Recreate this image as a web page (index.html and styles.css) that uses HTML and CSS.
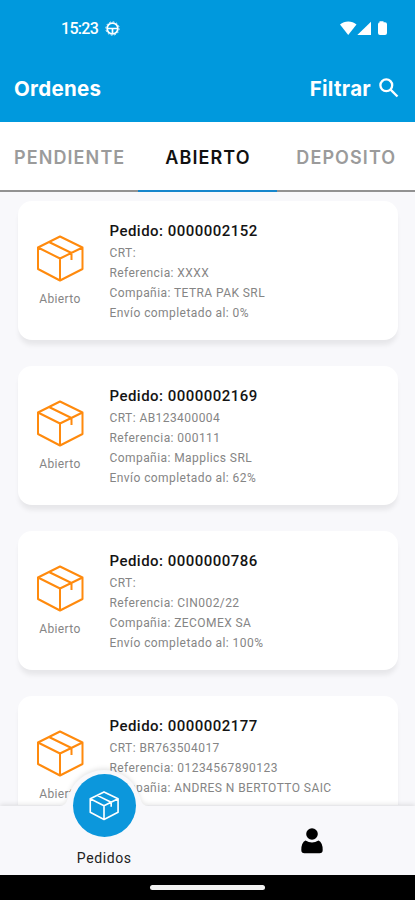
FILE: index.html
```
<!DOCTYPE html>
<html lang="es">
  <head>
    <title>Ordenes</title>
    <meta charset="UTF-8" />
    <meta name="viewport" content="width=device-width, initial-scale=1.0" />
    <link rel="stylesheet" href="styles.css">
  </head>
  <body>
    <svg class="symbols" aria-hidden="true">
      <symbol id="box" viewBox="0 0 48 48">
        <path d="M24 1.500 46.500 12.500V34L24 45.500 2 34V12.500Z M2 12.500 24 23.500 46.500 12.500 M24 23.500V45.500 M13 7 35.500 18V25" />
      </symbol>
    </svg>

    <div class="screen">
      <header class="header">
        <div class="status-bar">
          <span class="time">15:23</span>
          <svg class="status-wheel" viewBox="0 0 16 16">
            <circle cx="8" cy="8" r="5.7" fill="none" stroke="#fff" stroke-width="1.8" />
            <circle cx="8" cy="8" r="7.1" fill="none" stroke="#fff" stroke-width="1" stroke-dasharray="1.8 1.92" />
            <path d="M3 8h10M8 8v5" fill="none" stroke="#fff" stroke-width="1.8" />
          </svg>
          <svg class="status-icons" viewBox="0 0 48 15">
            <path d="M0 3.6C4.5-.4 12-.4 16.500 3.600L8.200 14Z" />
            <path d="M31 .8V14H17.300Z" />
            <path d="M39.500 1.200V.2h4v1h1.500q2 0 2 2V12q0 2-2 2h-5q-2 0-2-2V3.200q0-2 2-2Z" />
          </svg>
        </div>
        <div class="title-bar">
          <h1>Ordenes</h1>
          <button class="filter">
            Filtrar
            <svg viewBox="0 0 20 20">
              <circle cx="7.300" cy="7.300" r="5.900" />
              <path d="M11.600 11.600 18.500 18.500" />
            </svg>
          </button>
        </div>
      </header>

      <nav class="tabs">
        <a class="tab">PENDIENTE</a>
        <a class="tab active">ABIERTO</a>
        <a class="tab">DEPOSITO</a>
      </nav>

      <main class="orders">
        <article class="card">
          <div class="state">
            <svg class="box-icon"><use href="#box" /></svg>
            <span>Abierto</span>
          </div>
          <div class="info">
            <h2>Pedido: 0000002152</h2>
            <p>CRT:</p>
            <p>Referencia: XXXX</p>
            <p>Compañia: TETRA PAK SRL</p>
            <p>Envío completado al: 0%</p>
          </div>
        </article>

        <article class="card">
          <div class="state">
            <svg class="box-icon"><use href="#box" /></svg>
            <span>Abierto</span>
          </div>
          <div class="info">
            <h2>Pedido: 0000002169</h2>
            <p>CRT: AB123400004</p>
            <p>Referencia: 000111</p>
            <p>Compañia: Mapplics SRL</p>
            <p>Envío completado al: 62%</p>
          </div>
        </article>

        <article class="card">
          <div class="state">
            <svg class="box-icon"><use href="#box" /></svg>
            <span>Abierto</span>
          </div>
          <div class="info">
            <h2>Pedido: 0000000786</h2>
            <p>CRT:</p>
            <p>Referencia: CIN002/22</p>
            <p>Compañia: ZECOMEX SA</p>
            <p>Envío completado al: 100%</p>
          </div>
        </article>

        <article class="card">
          <div class="state">
            <svg class="box-icon"><use href="#box" /></svg>
            <span>Abierto</span>
          </div>
          <div class="info">
            <h2>Pedido: 0000002177</h2>
            <p>CRT: BR763504017</p>
            <p>Referencia: 01234567890123</p>
            <p>Compañia: ANDRES N BERTOTTO SAIC</p>
          </div>
        </article>
      </main>

      <footer class="bottom-nav">
        <svg class="nav-shape" viewBox="0 0 415 112">
          <path d="M-10 43H60Q66 43 67.500 36A37.500 37.500 0 0 1 140.500 36Q142 43 148 43H425V125H-10Z" />
        </svg>
        <a class="nav-item">
          <span class="nav-bubble"><svg class="box-icon"><use href="#box" /></svg></span>
          <span class="nav-label">Pedidos</span>
        </a>
        <a class="nav-item">
          <svg class="user-icon" viewBox="0 0 22 26">
            <circle cx="11" cy="6" r="5.800" />
            <path d="M4.500 12.500Q11 16.500 17.500 12.500Q21.700 14.500 21.700 22Q21.700 25.300 18.500 25.300H3.500Q.3 25.300.3 22Q.3 14.500 4.500 12.500Z" />
          </svg>
        </a>
      </footer>

      <div class="system-bar"><span class="handle"></span></div>
    </div>
  </body>
</html>
```
FILE: styles.css
```
* {
  margin: 0;
  padding: 0;
  box-sizing: border-box;
}

body {
  font-family: Roboto, 'Noto Sans', sans-serif;
  background: #f8f8fb;
}

.symbols {
  position: absolute;
  width: 0;
  height: 0;
}

.screen {
  width: 100%;
  height: 900px;
  display: flex;
  flex-direction: column;
  overflow: hidden;
}

/* Header */
.header {
  flex: none;
  height: 122px;
  background: #0099dd;
  color: #fff;
}

.status-bar {
  height: 56px;
  padding: 0 27px 0 61px;
  display: flex;
  align-items: center;
}

.time {
  font-size: 16px;
  font-weight: 500;
  letter-spacing: -0.7px;
}

.status-wheel {
  width: 15px;
  height: 15px;
  margin-left: 7px;
}

.status-icons {
  width: 48px;
  height: 15px;
  margin-left: auto;
  fill: #fff;
}

.title-bar {
  height: 65px;
  padding: 0 16px 0 14px;
  display: flex;
  align-items: center;
  justify-content: space-between;
}

h1,
.filter {
  font-family: Inter, sans-serif;
  font-size: 20.5px;
  font-weight: 700;
  letter-spacing: 0.3px;
}

.filter {
  display: flex;
  align-items: center;
  gap: 8px;
  border: none;
  background: none;
  color: #fff;
}

.filter svg {
  width: 20px;
  height: 20px;
  margin-top: -2px;
  fill: none;
  stroke: #fff;
  stroke-width: 2.3;
}

/* Tabs */
.tabs {
  flex: none;
  height: 70px;
  display: grid;
  grid-template-columns: repeat(3, 1fr);
  background: #fff;
}

.tab {
  display: flex;
  align-items: center;
  justify-content: center;
  padding: 2px 0 0 1px;
  border-bottom: 2px solid #929292;
  font-family: Inter, sans-serif;
  font-size: 18px;
  font-weight: 600;
  letter-spacing: 1.1px;
  color: #9b9b9b;
}

.tab.active {
  border-color: #1686cc;
  color: #111;
}

/* Order list */
.orders {
  flex: 1;
  min-height: 0;
  overflow: hidden;
  padding: 9px 17px 0 18px;
  display: flex;
  flex-direction: column;
  gap: 26px;
}

.card {
  flex: none;
  height: 139px;
  padding: 18px 0 0 13px;
  display: flex;
  background: #fff;
  border-radius: 14px;
  box-shadow: 0 6px 5px -1px rgba(0, 0, 0, 0.07);
}

.state {
  width: 58px;
  padding-top: 16px;
  display: flex;
  flex-direction: column;
  align-items: center;
  font-size: 12px;
  letter-spacing: 0.4px;
  color: #858585;
}

.box-icon {
  width: 48px;
  height: 48px;
  fill: none;
  stroke: #ff8a0d;
  stroke-width: 2;
  stroke-linejoin: round;
}

.state span {
  margin-top: 9px;
  line-height: 14px;
}

.info {
  margin-left: 20.5px;
}

.info h2 {
  font-size: 15px;
  font-weight: 500;
  line-height: 24px;
  letter-spacing: 0.47px;
  color: #141414;
}

.info p {
  font-size: 12px;
  line-height: 20px;
  letter-spacing: 0.43px;
  color: #858585;
}

/* Bottom navigation */
.bottom-nav {
  position: relative;
  flex: none;
  height: 70px;
  display: grid;
  grid-template-columns: 1fr 1fr;
}

.nav-shape {
  position: absolute;
  left: 0;
  bottom: 0;
  width: 415px;
  height: 112px;
  fill: #f8f8fb;
  filter: drop-shadow(0 -2px 2px rgba(0, 0, 0, 0.09));
}

.nav-item {
  position: relative;
  display: flex;
  flex-direction: column;
  align-items: center;
}

.nav-bubble {
  width: 63px;
  height: 63px;
  margin: -31px 0 0 1px;
  display: flex;
  align-items: center;
  justify-content: center;
  border-radius: 50%;
  background: #0c97dc;
}

.nav-bubble .box-icon {
  width: 30px;
  height: 30px;
  margin-top: 1px;
  stroke: #fff;
  stroke-width: 2.6;
}

.nav-label {
  margin: 13px 0 0 1px;
  font-size: 14px;
  line-height: 16px;
  letter-spacing: 0.6px;
  color: #222;
}

.user-icon {
  width: 22px;
  height: 26px;
  margin: 23px 0 0 1px;
}

.system-bar {
  flex: none;
  height: 25px;
  display: flex;
  justify-content: center;
  padding-top: 10px;
  background: #000;
}

.handle {
  width: 115px;
  height: 5px;
  border-radius: 3px;
  background: #f2f2f2;
}
```
